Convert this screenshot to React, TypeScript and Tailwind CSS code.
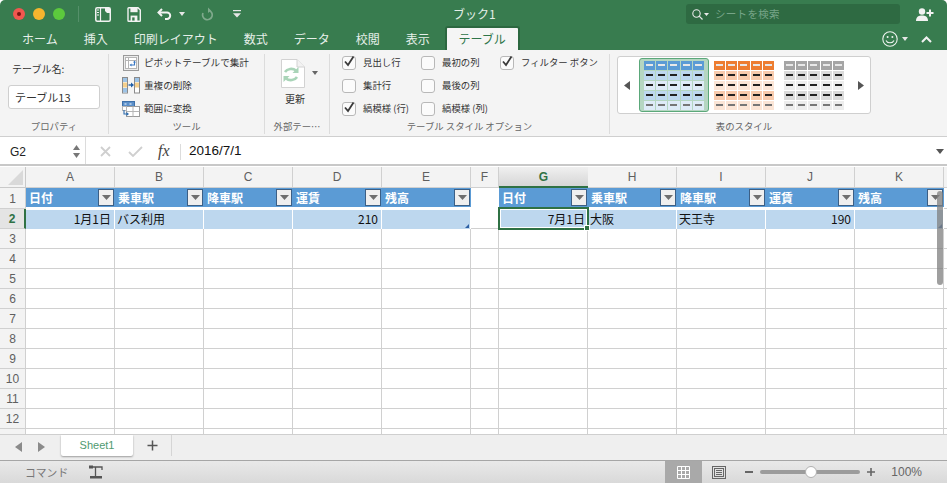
import React from "react";

const JP = "[font-family:'Noto_Sans_CJK_JP','Noto_Sans',sans-serif]";

function Caret({ className = "", color = "#666", w = 7, h = 4, up = false }: { className?: string; color?: string; w?: number; h?: number; up?: boolean }) {
  return (
    <svg width={w} height={h} viewBox="0 0 8 4" preserveAspectRatio="none" className={className}>
      <path d={up ? "M0 4 L4 0 L8 4 Z" : "M0 0 L8 0 L4 4 Z"} fill={color} />
    </svg>
  );
}

function Lights() {
  return (
    <div className="flex items-center gap-2 pl-[13px]">
      <div className="flex h-3 w-3 items-center justify-center rounded-full bg-[#f0574f]">
        <div className="h-1 w-1 rounded-full bg-[#7a1410]" />
      </div>
      <div className="h-3 w-3 rounded-full bg-[#f5b52e]" />
      <div className="h-3 w-3 rounded-full bg-[#5cc93d]" />
    </div>
  );
}

function QuickIcons() {
  return (
    <div className="ml-[13px] flex h-[16px] items-center border-l border-[#55906a] pl-[16px]">
      <svg width="16" height="15" viewBox="0 0 16 15" fill="none" className="mr-4">
        <rect x="0.75" y="0.75" width="14.5" height="13.5" rx="1.5" stroke="#f2f2f2" strokeWidth="1.5" />
        <path d="M5.5 1 V14" stroke="#f2f2f2" strokeWidth="1.2" />
        <path d="M2 3h2M2 5.5h2M2 8h2" stroke="#f2f2f2" />
        <path d="M10 1 h5 v5 h-3 l-2 -2 Z" fill="#f2f2f2" />
      </svg>
      <svg width="14" height="15" viewBox="0 0 14 15" fill="none" className="mr-4">
        <path d="M1 1.5 a.8 .8 0 0 1 .8 -.8 H11 L13.3 3 V13.5 a.8 .8 0 0 1 -.8 .8 H1.8 a.8 .8 0 0 1 -.8 -.8 Z" stroke="#f2f2f2" strokeWidth="1.4" />
        <path d="M3.4 1 H10.6 V5.2 H3.4 Z" fill="#f2f2f2" />
        <path d="M3.6 8.6 H10.4 V14 H3.6 Z" fill="#f2f2f2" />
        <rect x="5.2" y="10.4" width="2.4" height="3.2" fill="#387c4f" />
      </svg>
      <svg width="16" height="12" viewBox="0 0 16 12" fill="none" className="mr-[6px]">
        <path d="M5 1 L1.5 4.5 L5 8" stroke="#f2f2f2" strokeWidth="2" />
        <path d="M2 4.5 H10 a3.2 3.2 0 0 1 0 6.4 H8" stroke="#f2f2f2" strokeWidth="2" />
      </svg>
      <Caret w={6} h={4} color="#e6e6e6" className="mr-4" />
      <svg width="12" height="14" viewBox="0 0 12 14" fill="none" className="mr-5">
        <path d="M7 0.5 L10 3.5 L7 6 Z" fill="#7fa98c" />
        <path d="M8 3.4 A4.8 4.8 0 1 1 2 6" stroke="#7fa98c" strokeWidth="1.7" />
      </svg>
      <svg width="8" height="8" viewBox="0 0 8 8">
        <rect x="0" y="0" width="8" height="1.2" fill="#e6e6e6" />
        <path d="M0 3.2 H8 L4 7.5 Z" fill="#e6e6e6" />
      </svg>
    </div>
  );
}

function TitleBar() {
  return (
    <div className="relative flex h-[28px] shrink-0 items-center">
      <Lights />
      <QuickIcons />
      <span className={`absolute left-[453px] top-[5px] text-[12px] leading-[18px] text-[#e4eee7] ${JP}`}>ブック1</span>
      <div className="ml-auto flex items-center pr-[13px]">
        <div className="mr-[16px] flex h-5 w-[214px] items-center rounded-[3px] bg-[#2e6a42] pl-[6px]">
          <svg width="11" height="11" viewBox="0 0 11 11" fill="none">
            <circle cx="4.5" cy="4.5" r="3.7" stroke="#eaeaea" strokeWidth="1.1" />
            <path d="M7.2 7.2 L10.5 10.5" stroke="#eaeaea" strokeWidth="1.2" />
          </svg>
          <Caret w={5} h={3} color="#eaeaea" className="ml-[1px]" />
          <span className={`ml-[6px] text-[10.5px] tracking-[0.3px] text-[#77a588] ${JP}`}>シートを検索</span>
        </div>
        <svg width="18" height="13" viewBox="0 0 18 13" fill="#f2f2f2">
          <circle cx="6" cy="3.5" r="3.2" />
          <path d="M0 13 C0 8.5 3 7.5 6 7.5 C9 7.5 12 8.5 12 13 Z" />
          <path d="M13 1.5 H15 V4 H17.5 V6 H15 V8.5 H13 V6 H10.5 V4 H13 Z" />
        </svg>
      </div>
    </div>
  );
}

const tabs = ["ホーム", "挿入", "印刷レイアウト", "数式", "データ", "校閲", "表示"];

function TabRow() {
  return (
    <div className="flex h-[22px] shrink-0 items-end pl-[22px]">
      <div className={`flex h-[21px] items-center gap-[26px] self-start text-[12px] text-[#e6efe9] ${JP}`}>
        {tabs.map((t) => (
          <span key={t}>{t}</span>
        ))}
      </div>
      <div className={`ml-[15px] flex h-[24px] w-[75px] items-center justify-center rounded-t-[3px] border-x-2 border-t-2 border-[#2c6840] bg-[#f5f5f5] text-[12px] text-[#2f7549] ${JP}`}>
        テーブル
      </div>
      <div className="ml-auto flex h-full items-center pr-[15px]">
        <svg width="16" height="16" viewBox="0 0 16 16" fill="none">
          <circle cx="8" cy="8" r="7.2" stroke="#eef3ef" strokeWidth="1.1" />
          <circle cx="5.6" cy="6" r="1" fill="#eef3ef" />
          <circle cx="10.4" cy="6" r="1" fill="#eef3ef" />
          <path d="M4 9.4 C5.5 12.6 10.5 12.6 12 9.4" stroke="#eef3ef" strokeWidth="1.1" />
        </svg>
        <Caret w={6} h={4} color="#e6e6e6" className="ml-[4px]" />
        <svg width="11" height="7" viewBox="0 0 11 7" fill="none" className="ml-[13px]">
          <path d="M1 6 L5.5 1.5 L10 6" stroke="#f2f2f2" strokeWidth="2" />
        </svg>
      </div>
    </div>
  );
}

function Group({ title, className, children }: { title: string; className: string; children: React.ReactNode }) {
  return (
    <div className={`flex h-[80px] shrink-0 flex-col ${className}`}>
      <div className="min-h-0 flex-1">{children}</div>
      <div className={`h-[15px] text-center text-[9.4px] leading-[15px] text-[#666] ${JP}`}>{title}</div>
    </div>
  );
}

function PivotIcon() {
  return (
    <svg width="16" height="16" viewBox="0 0 16 16" fill="none">
      <rect x="0.5" y="0.5" width="15" height="15" fill="#ececec" stroke="#9a9a9a" />
      <rect x="2.5" y="2.5" width="11" height="11" fill="#fff" stroke="#b5b5b5" />
      <path d="M2.5 5.5h11M5.5 2.5v11" stroke="#b5b5b5" />
      <path d="M11.5 7 V10 H8" stroke="#3a78c4" strokeWidth="1.1" />
      <path d="M6.5 10 L8.5 8.5 V11.5 Z M10 7.5 L11.5 5.5 L13 7.5 Z" fill="#3a78c4" />
    </svg>
  );
}

function DupIcon() {
  return (
    <svg width="18" height="17" viewBox="0 0 18 17" fill="none">
      <rect x="0.5" y="0.5" width="5" height="15.5" fill="#fff" stroke="#8a8a8a" />
      <rect x="1" y="1" width="4" height="4" fill="#9dc3e6" />
      <rect x="1" y="5.5" width="4" height="5" fill="#f4cf8c" />
      <rect x="1" y="11" width="4" height="4.5" fill="#9dc3e6" />
      <rect x="12.5" y="0.5" width="5" height="15.5" fill="#fff" stroke="#8a8a8a" />
      <rect x="13" y="1" width="4" height="4" fill="#9dc3e6" />
      <rect x="13" y="5.5" width="4" height="5" fill="#f4cf8c" />
      <path d="M6.5 8 H10" stroke="#1f5fa8" strokeWidth="1.4" />
      <path d="M9 5.5 L12 8 L9 10.5 Z" fill="#1f5fa8" />
    </svg>
  );
}

function ConvertIcon() {
  return (
    <svg width="18" height="16" viewBox="0 0 18 16" fill="none">
      <rect x="0.5" y="0.5" width="12" height="5" fill="#5b8fc9" stroke="#3f70a8" />
      <path d="M2.5 3h2M7.5 3h2" stroke="#fff" />
      <rect x="4.5" y="5.5" width="13" height="10" fill="#fff" stroke="#9a9a9a" />
      <path d="M4.5 10.5h13M11 5.5v10" stroke="#b5b5b5" />
      <rect x="0.5" y="5.5" width="4" height="4" fill="#fff" stroke="#b5b5b5" />
      <path d="M2 9 V13 H5" stroke="#2c6cb0" strokeWidth="1.1" />
      <path d="M4.5 11 L7 13 L4.5 15 Z" fill="#2c6cb0" />
    </svg>
  );
}

function ToolRow({ icon, label }: { icon: React.ReactNode; label: string }) {
  return (
    <div className="flex h-[23px] items-center">
      <div className="flex w-[22px] justify-center">{icon}</div>
      <span className={`ml-[2px] whitespace-nowrap text-[9.6px] text-[#333] ${JP}`}>{label}</span>
    </div>
  );
}

function Check({ label, on = false, className = "" }: { label: string; on?: boolean; className?: string }) {
  return (
    <div className={`flex h-[23px] items-center ${className}`}>
      <div className="relative h-[14px] w-[14px] shrink-0 rounded-[3px] border border-[#b8b8b8] bg-[#fbfbfb]">
        {on && (
          <svg width="14" height="14" viewBox="0 0 14 14" fill="none" className="absolute left-[-1px] top-[-3px]">
            <path d="M3 7.5 L6 11 L11.5 2.5" stroke="#3a3a3a" strokeWidth="1.8" />
          </svg>
        )}
      </div>
      <span className={`ml-[7px] whitespace-nowrap text-[9.4px] text-[#333] ${JP}`}>{label}</span>
    </div>
  );
}

function Swatch({ head, dark, light, bottom }: { head: string; dark: string; light: string; bottom: string }) {
  const rows = [head, dark, light, dark, light];
  return (
    <div className="grid w-[60px] grid-cols-5 gap-px">
      {rows.map((bg, r) =>
        [0, 1, 2, 3, 4].map((c) => (
          <div key={`${r}-${c}`} className="flex h-[9px] items-center justify-center" style={{ backgroundColor: bg }}>
            <div
              className="h-[1.5px] w-[7px]"
              style={{ backgroundColor: r === 0 ? "#e8e8e8" : r === 4 ? bottom : "#222" }}
            />
          </div>
        ))
      )}
    </div>
  );
}

function Ribbon() {
  return (
    <div className="flex h-[87px] shrink-0 border-b border-[#cfcfcf] bg-[#f4f4f4] pt-1">
      <Group title="プロパティ" className="w-[109px] border-r border-[#dcdcdc]">
        <div className={`pl-[12px] pt-[7px] text-[10px] leading-[15px] text-[#333] ${JP}`}>テーブル名:</div>
        <div className={`ml-2 mt-[9px] flex h-6 w-[92px] items-center rounded-[3px] border border-[#cfcfcf] bg-white pl-[6px] text-[11px] text-[#333] ${JP}`}>
          テーブル13
        </div>
      </Group>
      <Group title="ツール" className="w-[156px] border-r border-[#dcdcdc]">
        <div className="mt-[-3px] pl-[11px]">
          <ToolRow icon={<PivotIcon />} label="ピボットテーブルで集計" />
          <ToolRow icon={<DupIcon />} label="重複の削除" />
          <ToolRow icon={<ConvertIcon />} label="範囲に変換" />
        </div>
      </Group>
      <Group title="外部テー…" className="w-[65px] border-r border-[#dcdcdc]">
        <div className="flex pl-[16px] pt-[5px]">
          <div className="flex flex-col items-center">
            <svg width="24" height="29" viewBox="0 0 24 29" fill="none">
              <path d="M0.5 0.5 H16 L23.5 8 V28.5 H0.5 Z" fill="#fff" stroke="#d2d2d2" />
              <path d="M16 0.5 V8 H23.5" stroke="#d2d2d2" fill="#f2f2f2" />
              <path d="M4 13 A7 6 0 0 1 15 11.5" stroke="#a9d4b8" strokeWidth="2.6" />
              <path d="M17.5 8 V14 H11.5 Z" fill="#a9d4b8" />
              <path d="M16 18 A7 6 0 0 1 5 19.5" stroke="#a9d4b8" strokeWidth="2.6" />
              <path d="M2.5 23 V17 H8.5 Z" fill="#a9d4b8" />
            </svg>
            <span className={`ml-[4px] mt-[3px] text-[10px] leading-[15px] text-[#333] ${JP}`}>更新</span>
          </div>
          <Caret w={6} h={4} color="#666" className="ml-[7px] mt-[12px]" />
        </div>
      </Group>
      <Group title="テーブル スタイル オプション" className="w-[280px] border-r border-[#dcdcdc]">
        <div className="mt-[-3px] flex pl-3">
          <div className="w-[79px]">
            <Check label="見出し行" on />
            <Check label="集計行" />
            <Check label="縞模様 (行)" on />
          </div>
          <div className="w-[79px]">
            <Check label="最初の列" />
            <Check label="最後の列" />
            <Check label="縞模様 (列)" />
          </div>
          <Check label="フィルター ボタン" on />
        </div>
      </Group>
      <Group title="表のスタイル" className="w-[268px]">
        <div className="ml-[7px] mt-[2px] flex h-[58px] w-[254px] items-center rounded-[3px] border border-[#cfcfcf] bg-white">
          <svg width="6" height="9" viewBox="0 0 6 9" className="ml-[6px]">
            <path d="M6 0 V9 L0 4.5 Z" fill="#555" />
          </svg>
          <div className="ml-[9px] flex h-[54px] w-[70px] items-center justify-center rounded-[3px] border border-[#5ba87a] bg-[#b5d6c1]">
            <Swatch head="#5b9bd5" dark="#bdd7ee" light="#deebf7" bottom="#777" />
          </div>
          <div className="ml-[5px]">
            <Swatch head="#ed7d31" dark="#f8cbad" light="#fbe5d6" bottom="#777" />
          </div>
          <div className="ml-[10px]">
            <Swatch head="#a5a5a5" dark="#dbdbdb" light="#ededed" bottom="#777" />
          </div>
          <svg width="6" height="9" viewBox="0 0 6 9" className="ml-[14px]">
            <path d="M0 0 V9 L6 4.5 Z" fill="#555" />
          </svg>
        </div>
      </Group>
    </div>
  );
}

function FormulaBar() {
  return (
    <div className="h-[30px] shrink-0 bg-white">
      <div className="flex h-[29px] items-center border-b-2 border-[#c8c8c8]">
        <div className="flex h-full w-[86px] items-center border-r border-[#dcdcdc] pl-[10px] pr-[5px] pt-[2px] text-[12px] text-[#222] [font-family:'Liberation_Sans',sans-serif]">
          <span>G2</span>
          <div className="ml-auto flex flex-col gap-[3px]">
            <Caret w={7} h={5} up color="#777" />
            <Caret w={7} h={5} color="#777" />
          </div>
        </div>
        <svg width="11" height="11" viewBox="0 0 11 11" fill="none" className="ml-[14px] mt-[2px]">
          <path d="M1 1 L10 10 M10 1 L1 10" stroke="#cfcfcf" strokeWidth="1.8" />
        </svg>
        <svg width="15" height="11" viewBox="0 0 15 11" fill="none" className="ml-[17px] mt-[2px]">
          <path d="M1 6 L5 10 L14 1" stroke="#cfcfcf" strokeWidth="1.8" />
        </svg>
        <span className="ml-[15px] w-[16px] text-[16px] italic text-[#444] [font-family:'Liberation_Serif',serif]">fx</span>
        <div className="ml-[6px] mt-[2px] h-[16px] w-px bg-[#dcdcdc]" />
        <span className="ml-[8px] mt-[2px] text-[13.5px] text-[#111] [font-family:'Liberation_Sans',sans-serif]">2016/7/1</span>
        <Caret w={8} h={5} color="#555" className="ml-auto mr-[3px] mt-[2px]" />
      </div>
    </div>
  );
}

const cols = ["A", "B", "C", "D", "E", "F", "G", "H", "I", "J", "K", ""];
const heads: Record<string, string> = {
  A: "日付", B: "乗車駅", C: "降車駅", D: "運賃", E: "残高",
  G: "日付", H: "乗車駅", I: "降車駅", J: "運賃", K: "残高",
};
const data: Record<string, { t: string; right?: boolean }> = {
  A: { t: "1月1日", right: true },
  B: { t: "バス利用" },
  D: { t: "210", right: true },
  G: { t: "7月1日", right: true },
  H: { t: "大阪" },
  I: { t: "天王寺" },
  J: { t: "190", right: true },
};

function FilterBtn() {
  return (
    <div className="ml-auto mr-px flex h-[17px] w-[16px] shrink-0 items-center justify-center border border-[#3c5f85] bg-[#efefef]">
      <Caret w={9} h={5} color="#6e6e6e" />
    </div>
  );
}

function Grid() {
  const isTable = (c: string) => !!heads[c];
  return (
    <div className="relative h-[267px] shrink-0 overflow-hidden bg-white">
      <div className={`grid w-[1033px] grid-cols-[26px_89px_89px_89px_89px_89px_28px_89px_89px_89px_89px_89px_89px] ${JP}`}>
        {/* column header */}
        <div className="relative h-[21px] border-r border-b border-[#c9c9c9] bg-[#f3f3f3]">
          <svg width="15" height="15" viewBox="0 0 15 15" className="absolute bottom-[2px] right-[2px]">
            <path d="M15 0 V15 H0 Z" fill="#d9d9d9" />
          </svg>
        </div>
        {cols.map((c, i) => (
          <div
            key={i}
            className={
              c === "G"
                ? "flex h-[21px] items-center justify-center border-b-2 border-[#2f7144] bg-gradient-to-b from-[#f0f0f0] to-[#d6d6d6] text-[12px] font-bold text-[#2f7144] [font-family:'Liberation_Sans',sans-serif]"
                : "flex h-[21px] items-center justify-center border-r border-b border-[#d0d0d0] bg-[#f3f3f3] text-[12px] text-[#5f5f5f] [font-family:'Liberation_Sans',sans-serif]"
            }
          >
            {c}
          </div>
        ))}

        {/* row 1 */}
        <div className="flex h-[21px] items-center justify-center border-r border-b border-[#d0d0d0] bg-[#f3f3f3] pt-px text-[12px] text-[#5f5f5f] [font-family:'Liberation_Sans',sans-serif]">1</div>
        {cols.map((c, i) =>
          isTable(c) ? (
            <div key={i} className="h-[21px] bg-white">
              <div className="flex h-[19px] items-center bg-[#5b9bd5] pl-[3px] text-[12px] font-bold leading-none text-white">
                <span className="whitespace-nowrap pt-px">{heads[c]}</span>
                <FilterBtn />
              </div>
            </div>
          ) : (
            <div key={i} className={`h-[21px] bg-white ${c === "F" ? "" : "border-r border-b border-[#d0d0d0]"}`} />
          )
        )}

        {/* row 2 */}
        <div className="flex h-5 items-center justify-center border-r-2 border-b border-[#d0d0d0] border-r-[#2f7144] bg-[#e4e4e4] text-[12px] font-bold text-[#2f7144] [font-family:'Liberation_Sans',sans-serif]">2</div>
        {cols.map((c, i) => {
          const d = data[c];
          if (c === "G") {
            return (
              <div key={i} className="relative h-5">
                <div className="absolute -top-[2px] -left-px z-10 h-[23px] w-[91px] border-2 border-[#2f7144] outline outline-1 -outline-offset-3 outline-white" />
                <div className="absolute -bottom-[2px] -right-[2px] z-20 h-[6px] w-[6px] border border-white bg-[#2f7144]" />
                <div className="flex h-5 items-center justify-end border-t border-white bg-[#bdd7ee] pb-[2px] pr-[3px] text-[12px] text-[#111]">{d.t}</div>
              </div>
            );
          }
          if (isTable(c)) {
            return (
              <div
                key={i}
                className={`relative flex h-5 items-center border-t border-r border-white bg-[#bdd7ee] pb-[2px] text-[12px] text-[#111] ${d?.right ? "justify-end pr-[3px]" : "pl-[2px]"}`}
              >
                {d ? <span className="whitespace-nowrap">{d.t}</span> : null}
                {(c === "E" || c === "K") && (
                  <svg width="4" height="4" viewBox="0 0 4 4" className="absolute bottom-px right-px">
                    <path d="M4 0 V4 H0 Z" fill="#2d5fa3" />
                  </svg>
                )}
              </div>
            );
          }
          return <div key={i} className="h-5 border-r border-b border-[#d0d0d0] bg-white" />;
        })}

        {/* rows 3-13 */}
        {[3, 4, 5, 6, 7, 8, 9, 10, 11, 12, 13].map((r) => (
          <React.Fragment key={r}>
            <div className="flex h-5 items-center justify-center border-r border-b border-[#d0d0d0] bg-[#f3f3f3] text-[12px] text-[#5f5f5f] [font-family:'Liberation_Sans',sans-serif]">{r < 13 ? r : ""}</div>
            {cols.map((c, i) => (
              <div key={i} className="h-5 border-r border-b border-[#d0d0d0] bg-white" />
            ))}
          </React.Fragment>
        ))}
      </div>
      <div className="absolute left-[937px] top-[24px] h-[94px] w-[6px] rounded-[3px] bg-[#7f7f7f]/75" />
    </div>
  );
}

function SheetTabs() {
  return (
    <div className="flex h-[26px] shrink-0 items-start border-t border-[#cfcfcf] bg-[#efefef]">
      <div className="flex h-[24px] w-[61px] items-center pl-[15px]">
        <svg width="7" height="10" viewBox="0 0 7 10"><path d="M7 0 V10 L0 5 Z" fill="#8a8a8a" /></svg>
        <svg width="7" height="10" viewBox="0 0 7 10" className="ml-[16px]"><path d="M0 0 V10 L7 5 Z" fill="#8a8a8a" /></svg>
      </div>
      <div className="flex h-[21px] w-[72px] items-center justify-center rounded-b-[2px] bg-white text-[11px] text-[#4f9a70] shadow-[0_1px_2px_rgba(0,0,0,0.35)] [font-family:'Liberation_Sans',sans-serif]">
        Sheet1
      </div>
      <div className="flex h-[21px] w-[39px] items-center justify-center border-r border-[#d5d5d5]">
        <svg width="11" height="11" viewBox="0 0 11 11"><path d="M5.5 0.5 V10.5 M0.5 5.5 H10.5" stroke="#555" strokeWidth="1.5" /></svg>
      </div>
    </div>
  );
}

function StatusBar() {
  return (
    <div className="flex h-[23px] shrink-0 items-center border-t border-[#a6a6a6] bg-gradient-to-b from-[#e9e9e9] to-[#d9d9d9]">
      <span className={`ml-[25px] text-[10.8px] text-[#777] ${JP}`}>コマンド</span>
      <svg width="16" height="14" viewBox="0 0 16 14" fill="none" className="ml-[20px]">
        <rect x="1" y="0.5" width="4" height="3" fill="#555" />
        <path d="M5 2 H14 V5 M7.5 2 V11" stroke="#555" strokeWidth="1.3" />
        <rect x="2" y="11" width="12" height="2.5" fill="#555" />
      </svg>
      <div className="ml-auto flex h-full w-[37px] items-center justify-center bg-[#a9a9a9]">
        <svg width="13" height="13" viewBox="0 0 13 13" fill="none">
          <path d="M0.5 0.5 H12.5 V12.5 H0.5 Z M0.5 4.5 H12.5 M0.5 8.5 H12.5 M4.5 0.5 V12.5 M8.5 0.5 V12.5" stroke="#fff" />
        </svg>
      </div>
      <svg width="14" height="13" viewBox="0 0 14 13" fill="none" className="ml-[10px]">
        <rect x="0.5" y="0.5" width="13" height="12" stroke="#666" />
        <rect x="2.5" y="2.5" width="9" height="8" stroke="#666" />
        <path d="M4 4.5h6M4 6.5h6M4 8.5h6" stroke="#666" />
      </svg>
      <div className="ml-[19px] h-[2px] w-[8px] bg-[#666]" />
      <div className="relative ml-[7px] h-[4px] w-[100px] rounded-full bg-[#9c9c9c]">
        <div className="absolute left-[45px] top-[-4px] h-3 w-3 rounded-full border border-[#b0b0b0] bg-white" />
      </div>
      <svg width="8" height="8" viewBox="0 0 8 8" className="ml-[7px]">
        <path d="M4 0 V8 M0 4 H8" stroke="#666" strokeWidth="1.6" />
      </svg>
      <span className="ml-[16px] mr-[25px] text-[12px] text-[#666] [font-family:'Liberation_Sans',sans-serif]">100%</span>
    </div>
  );
}

export default function App() {
  return (
    <div className="flex h-[483px] w-[947px] flex-col overflow-hidden bg-white">
      <div className="flex h-[50px] shrink-0 flex-col rounded-t-[5px] bg-[#387c4f]">
        <TitleBar />
        <TabRow />
      </div>
      <Ribbon />
      <FormulaBar />
      <Grid />
      <SheetTabs />
      <StatusBar />
    </div>
  );
}
